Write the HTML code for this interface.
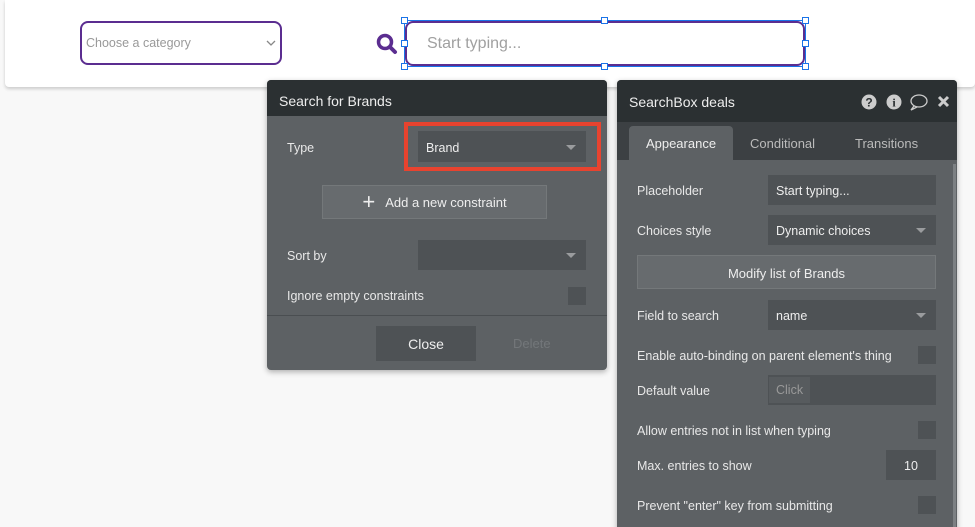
<!DOCTYPE html>
<html><head><style>
*{box-sizing:border-box;margin:0;padding:0}
html,body{width:975px;height:527px;overflow:hidden}
body{background:#f8f8f8;font-family:"Liberation Sans",sans-serif;position:relative;font-size:13px}
.a{position:absolute}
.top{left:5px;top:0;width:970px;height:87px;background:#fff;box-shadow:0 2px 3px rgba(0,0,0,.18);border-radius:0 0 4px 4px}
.pan{background:#5d6164;border-radius:4px;box-shadow:0 2px 6px rgba(0,0,0,.3);overflow:hidden}
.hd{background:#2b3032;color:#eee;font-size:14px}
.lbl{color:#e8e8e8;font-size:12.5px}
.inp{background:#4e5255;color:#eee;font-size:12.5px;padding-left:8px;display:flex;align-items:center}
.tri{position:absolute;right:10px;top:50%;margin-top:-2px;border-left:5px solid transparent;border-right:5px solid transparent;border-top:5px solid #9a9c9e}
.cb{background:#4e5255;width:18px;height:18px}
.h{width:7px;height:7px;border:1px solid #1a73e8;background:#fff}
</style></head><body>
<div class="a top"></div>
<div class="a" style="left:80px;top:21px;width:202px;height:44px;border:2px solid #5b2d90;border-radius:8px;background:#fff;color:#999;font-size:12.5px;padding:13px 0 0 4px">Choose a category</div>
<svg class="a" style="left:265px;top:38px" width="12" height="10"><path d="M2 3l4 4 4-4" stroke="#888" fill="none" stroke-width="1.3"/></svg>
<svg class="a" style="left:375px;top:32px" width="24" height="24"><circle cx="10" cy="10" r="6.5" stroke="#5b2d90" stroke-width="3.5" fill="none"/><path d="M15 15l5 5" stroke="#5b2d90" stroke-width="4" stroke-linecap="round"/></svg>
<div class="a" style="left:404px;top:20px;width:402px;height:47px;border:1px solid #1a73e8"></div>
<div class="a" style="left:405px;top:21px;width:400px;height:45px;border:2px solid #5b2d90;border-radius:8px;background:#fff;color:#a0a0a0;font-size:16px;padding:12px 0 0 20px">Start typing...</div>
<div class="a h" style="left:401px;top:17px"></div><div class="a h" style="left:601px;top:17px"></div><div class="a h" style="left:802px;top:17px"></div>
<div class="a h" style="left:401px;top:40px"></div><div class="a h" style="left:802px;top:40px"></div>
<div class="a h" style="left:401px;top:63px"></div><div class="a h" style="left:601px;top:63px"></div><div class="a h" style="left:802px;top:63px"></div>

<div class="a pan" style="left:267px;top:80px;width:340px;height:290px">
<div class="hd" style="height:36px;padding:13px 0 0 12px">Search for Brands</div>
<div class="a lbl" style="left:20px;top:61px">Type</div>
<div class="a" style="left:137px;top:42px;width:197px;height:49px;border:4px solid #e8432f"></div>
<div class="a inp" style="left:151px;top:51px;width:168px;height:31px;padding-top:2px">Brand<span class="tri"></span></div>
<div class="a" style="left:55px;top:105px;width:225px;height:34px;background:#676b6e;border:1px solid #74787a;color:#eee;font-size:13px;display:flex;align-items:center;justify-content:center"><span style="font-size:22px;line-height:20px;margin-right:10px;font-weight:300">+</span>Add a new constraint</div>
<div class="a lbl" style="left:20px;top:169px">Sort by</div>
<div class="a inp" style="left:151px;top:160px;width:168px;height:30px"><span class="tri"></span></div>
<div class="a lbl" style="left:20px;top:209px">Ignore empty constraints</div>
<div class="a cb" style="left:301px;top:207px"></div>
<div class="a" style="left:0;top:235px;width:340px;height:1px;background:#4a4e51"></div>
<div class="a" style="left:109px;top:246px;width:100px;height:35px;background:#4e5255;color:#eee;font-size:14px;text-align:center;padding-top:10px">Close</div>
<div class="a" style="left:246px;top:256px;color:#73777a;font-size:13px">Delete</div>
</div>

<div class="a pan" style="left:617px;top:80px;width:340px;height:460px">
<div class="hd" style="height:42px;padding:14px 0 0 12px">SearchBox deals</div>
<svg class="a" style="left:244px;top:13px" width="90" height="18">
<circle cx="8" cy="9" r="7.5" fill="#ccc"/><text x="8" y="13.5" font-size="12" font-weight="bold" text-anchor="middle" fill="#2b3032" font-family="Liberation Sans">?</text>
<circle cx="33" cy="9" r="7.5" fill="#ccc"/><text x="33" y="13.5" font-size="12" font-weight="bold" text-anchor="middle" fill="#2b3032" font-family="Liberation Serif">i</text>
<ellipse cx="58" cy="8" rx="8" ry="6" fill="none" stroke="#ccc" stroke-width="1.3"/><path d="M53 13l-3 4 6-3" fill="none" stroke="#ccc" stroke-width="1.3"/>
<path d="M78 4l9 9M87 4l-9 9" stroke="#ccc" stroke-width="3"/>
</svg>
<div class="a" style="left:0;top:42px;width:340px;height:38px;background:#3c4043"></div>
<div class="a" style="left:12px;top:46px;width:104px;height:34px;background:#5d6164;border-radius:4px 4px 0 0;color:#eee;text-align:center;padding-top:10px;font-size:13px">Appearance</div>
<div class="a" style="left:133px;top:56px;color:#bbb;font-size:13px">Conditional</div>
<div class="a" style="left:238px;top:56px;color:#bbb;font-size:13px">Transitions</div>
<div class="a" style="left:336px;top:84px;width:3px;height:380px;background:#7c8083"></div>
<div class="a lbl" style="left:20px;top:104px">Placeholder</div>
<div class="a inp" style="left:151px;top:95px;width:168px;height:30px;padding-top:2px">Start typing...</div>
<div class="a lbl" style="left:20px;top:144px">Choices style</div>
<div class="a inp" style="left:151px;top:135px;width:168px;height:30px;padding-top:2px">Dynamic choices<span class="tri"></span></div>
<div class="a" style="left:20px;top:175px;width:299px;height:34px;background:#676b6e;border:1px solid #74787a;color:#eee;text-align:center;padding-top:10px">Modify list of Brands</div>
<div class="a lbl" style="left:20px;top:229px">Field to search</div>
<div class="a inp" style="left:151px;top:220px;width:168px;height:30px;padding-top:2px">name<span class="tri"></span></div>
<div class="a lbl" style="left:20px;top:269px">Enable auto-binding on parent element's thing</div>
<div class="a cb" style="left:301px;top:266px"></div>
<div class="a lbl" style="left:20px;top:304px">Default value</div>
<div class="a inp" style="left:151px;top:295px;width:168px;height:30px"><span style="background:#575b5e;color:#999;padding:6px 7px;margin-left:-7px">Click</span></div>
<div class="a lbl" style="left:20px;top:344px">Allow entries not in list when typing</div>
<div class="a cb" style="left:301px;top:341px"></div>
<div class="a lbl" style="left:20px;top:379px">Max. entries to show</div>
<div class="a inp" style="left:269px;top:370px;width:50px;height:30px;padding-left:18px;padding-top:2px">10</div>
<div class="a lbl" style="left:20px;top:419px">Prevent "enter" key from submitting</div>
<div class="a cb" style="left:301px;top:416px"></div>
</div>
</body></html>
